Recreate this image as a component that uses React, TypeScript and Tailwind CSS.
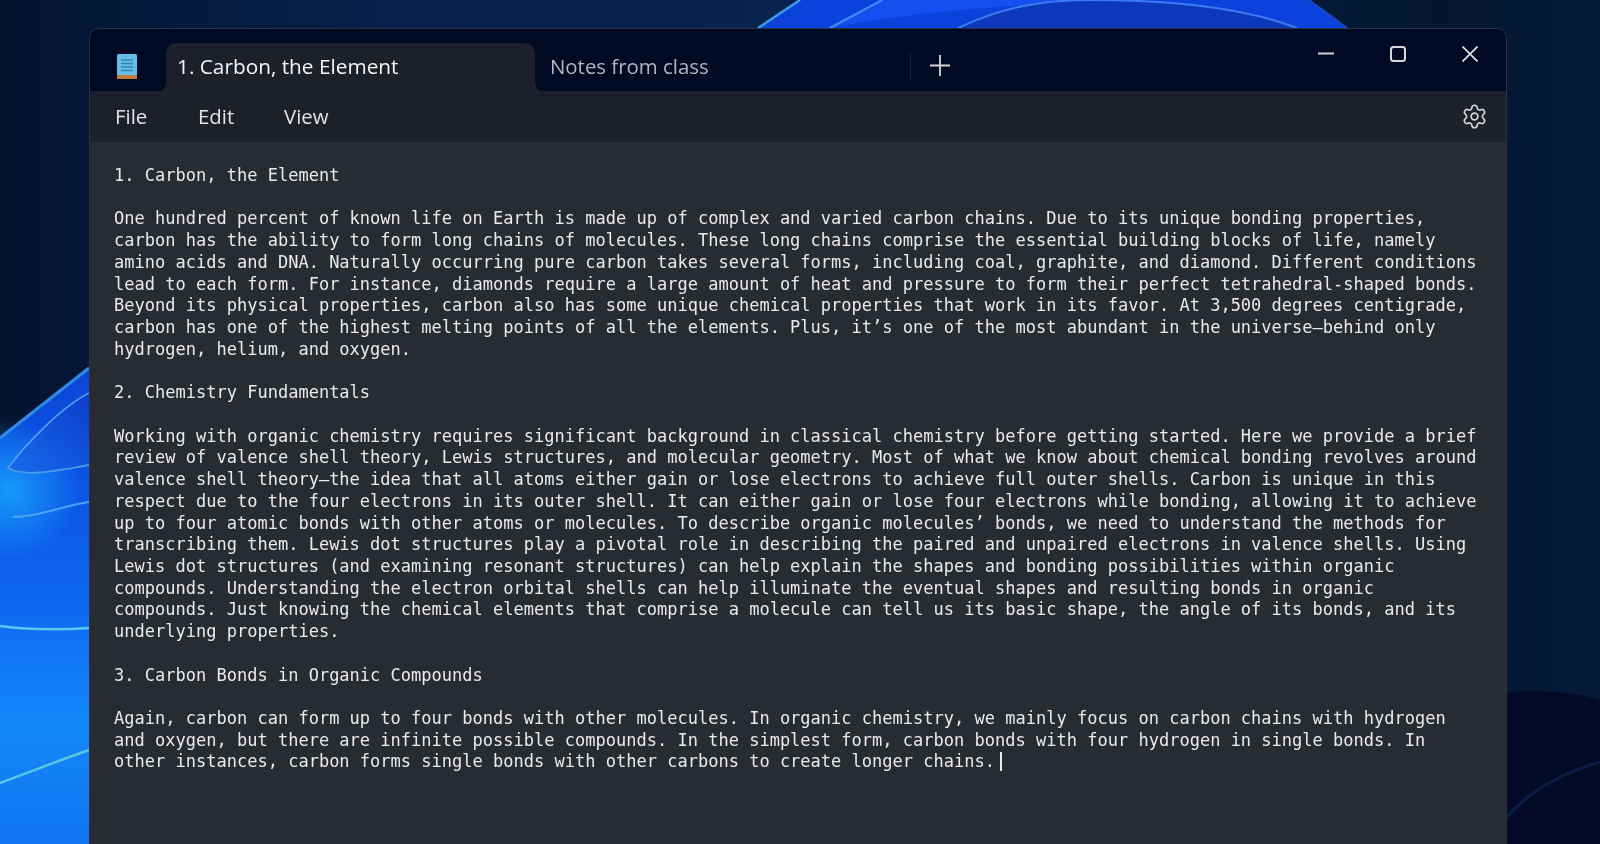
import React from 'react';
import { Settings } from 'lucide-react';

const noteLines = [
  '1. Carbon, the Element',
  '',
  'One hundred percent of known life on Earth is made up of complex and varied carbon chains. Due to its unique bonding properties,',
  'carbon has the ability to form long chains of molecules. These long chains comprise the essential building blocks of life, namely',
  'amino acids and DNA. Naturally occurring pure carbon takes several forms, including coal, graphite, and diamond. Different conditions',
  'lead to each form. For instance, diamonds require a large amount of heat and pressure to form their perfect tetrahedral-shaped bonds.',
  'Beyond its physical properties, carbon also has some unique chemical properties that work in its favor. At 3,500 degrees centigrade,',
  'carbon has one of the highest melting points of all the elements. Plus, it’s one of the most abundant in the universe—behind only',
  'hydrogen, helium, and oxygen.',
  '',
  '2. Chemistry Fundamentals',
  '',
  'Working with organic chemistry requires significant background in classical chemistry before getting started. Here we provide a brief',
  'review of valence shell theory, Lewis structures, and molecular geometry. Most of what we know about chemical bonding revolves around',
  'valence shell theory—the idea that all atoms either gain or lose electrons to achieve full outer shells. Carbon is unique in this',
  'respect due to the four electrons in its outer shell. It can either gain or lose four electrons while bonding, allowing it to achieve',
  'up to four atomic bonds with other atoms or molecules. To describe organic molecules’ bonds, we need to understand the methods for',
  'transcribing them. Lewis dot structures play a pivotal role in describing the paired and unpaired electrons in valence shells. Using',
  'Lewis dot structures (and examining resonant structures) can help explain the shapes and bonding possibilities within organic',
  'compounds. Understanding the electron orbital shells can help illuminate the eventual shapes and resulting bonds in organic',
  'compounds. Just knowing the chemical elements that comprise a molecule can tell us its basic shape, the angle of its bonds, and its',
  'underlying properties.',
  '',
  '3. Carbon Bonds in Organic Compounds',
  '',
  'Again, carbon can form up to four bonds with other molecules. In organic chemistry, we mainly focus on carbon chains with hydrogen',
  'and oxygen, but there are infinite possible compounds. In the simplest form, carbon bonds with four hydrogen in single bonds. In',
];
const lastLine = 'other instances, carbon forms single bonds with other carbons to create longer chains.';

const Wallpaper = () => (
  <svg className="absolute inset-0 blur-[0.6px]" width="1600" height="844" viewBox="0 0 1600 844">
    <defs>
      <linearGradient id="sky" x1="0" y1="0" x2="1" y2="0">
        <stop offset="0" stopColor="#031430" />
        <stop offset="0.25" stopColor="#07214c" />
        <stop offset="0.6" stopColor="#07244f" />
        <stop offset="0.9" stopColor="#04162f" />
        <stop offset="1" stopColor="#051a3a" />
      </linearGradient>
      <linearGradient id="petal" x1="0" y1="370" x2="0" y2="844" gradientUnits="userSpaceOnUse">
        <stop offset="0" stopColor="#0b46d4" />
        <stop offset="0.2" stopColor="#0c52e6" />
        <stop offset="0.45" stopColor="#0d62ee" />
        <stop offset="0.75" stopColor="#1488fa" />
        <stop offset="1" stopColor="#0f74ee" />
      </linearGradient>
      <radialGradient id="glow" cx="10" cy="490" r="70" gradientUnits="userSpaceOnUse">
        <stop offset="0" stopColor="#169bf8" />
        <stop offset="1" stopColor="#169bf8" stopOpacity="0" />
      </radialGradient>
      <linearGradient id="inner" x1="89" y1="393" x2="20" y2="468" gradientUnits="userSpaceOnUse">
        <stop offset="0" stopColor="#0b3cc8" />
        <stop offset="1" stopColor="#1766ea" />
      </linearGradient>
    </defs>
    <rect width="1600" height="844" fill="url(#sky)" />
    {/* top of the bloom */}
    <path d="M758 28 L800 0 L1309 0 C1322 8 1336 18 1347 28 Z" fill="#0c42dc" />
    <path d="M830 28 L882 0 L1140 0 C1000 4 900 14 830 28 Z" fill="#164ff0" />
    <path d="M958 28 C1000 8 1040 0 1090 0 C1180 0 1250 10 1297 28 Z" fill="#0d38bc" />
    <path d="M758 28 L800 0" fill="none" stroke="#3f9ae8" strokeWidth="2.5" />
    <path d="M830 28 L882 0" fill="none" stroke="#3f8eee" strokeWidth="2" />
    <path d="M958 28 C1000 8 1040 0 1090 0 C1180 0 1250 10 1297 28" fill="none" stroke="#3a7cf0" strokeWidth="2" />
    <path d="M1347 28 L1309 0" fill="none" stroke="#1c48b8" strokeWidth="2" />
    {/* left petals */}
    <path d="M0 438 L89 368 L89 844 L0 844 Z" fill="url(#petal)" />
    <rect x="0" y="420" width="89" height="140" fill="url(#glow)" />
    <path d="M0 438 L89 368" stroke="#2f8ae8" strokeWidth="3" fill="none" />
    <path d="M89 393 C60 408 25 445 8 468 C25 478 60 470 89 465 Z" fill="url(#inner)" />
    <path d="M89 393 C60 408 25 445 8 468 C25 478 60 470 89 465" fill="none" stroke="#4a9cea" strokeWidth="1.8" />
    <path d="M13 517 C40 517 65 505 89 502" fill="none" stroke="#4aa4f2" strokeWidth="2" />
    <path d="M0 626 C30 630 60 630 89 628" fill="none" stroke="#5ac8ee" strokeWidth="2.5" />
    <path d="M0 783 C30 772 60 760 89 750" fill="none" stroke="#58c6e0" strokeWidth="2.5" />
    {/* dark hills on the right */}
    <path d="M1506 692 C1540 690 1575 692 1600 700 L1600 844 L1506 844 Z" fill="#020a26" />
    <path d="M1506 818 C1530 790 1565 772 1600 762" fill="none" stroke="#0b1c46" strokeWidth="3" />
  </svg>
);

const NotepadIcon = () => (
  <svg width="20" height="25" viewBox="0 0 20 25">
    <rect x="0" y="0" width="20" height="25" rx="1.5" fill="#66bdea" />
    <rect x="0" y="21" width="20" height="4" fill="#c07a3e" />
    <path d="M4 6h12M4 9.5h12M4 13h12M4 16.5h12" stroke="#3a83ad" strokeWidth="1.3" />
  </svg>
);

const App = () => (
  <div className="relative w-[1600px] h-[844px] overflow-hidden bg-[#041a3f] font-['Open_Sans',sans-serif]">
    <Wallpaper />
    <div className="relative flex flex-col ml-[89px] mt-[28px] w-[1418px] h-[816px] rounded-t-[10px] border-x border-t border-[#2a3244] overflow-hidden blur-[0.4px]">
      <div className="flex h-[62px] shrink-0 bg-[#1c202b]">
        <div className="flex items-start w-[76px] pt-[25px] pl-[27px] bg-[#000a24] rounded-br-lg">
          <NotepadIcon />
        </div>
        <div className="pt-[14px] bg-[#000a24]">
          <div className="flex items-center w-[369px] h-full rounded-t-[10px] bg-[#1c202b] pb-[1px] pl-[11px] text-[20.8px] font-medium text-[#f6f6f6]">
            1. Carbon, the Element
          </div>
        </div>
        <div className="relative flex flex-1 bg-[#000a24] rounded-bl-lg">
          <div className="flex items-center w-[375px] pt-[12px] pl-[15px] text-[20.4px] text-[#b4b6bc]">
            Notes from class
          </div>
          <div className="mt-[24px] h-[26px] w-px bg-[#1c2235]" />
          <div className="pl-[19px] pt-[26px]">
            <svg width="20" height="21" viewBox="0 0 20 21" stroke="#d8d8d8" strokeWidth="1.8" fill="none">
              <path d="M10 0v21M0 10.5h20" />
            </svg>
          </div>
          <div className="ml-auto flex items-start pt-[17px] pr-[28px]">
            <svg className="mr-[56px]" width="16" height="16" viewBox="0 0 16 16" stroke="#cfcfcf" strokeWidth="2" fill="none">
              <path d="M0 7.5h16" />
            </svg>
            <svg className="mr-[56px]" width="16" height="16" viewBox="0 0 16 16" stroke="#d8d8d8" strokeWidth="2" fill="none">
              <rect x="1" y="1" width="14" height="14" rx="2.5" />
            </svg>
            <svg width="16" height="16" viewBox="0 0 16 16" stroke="#e4e4e4" strokeWidth="1.7" fill="none">
              <path d="M0.5 0.5l15 15M15.5 0.5l-15 15" />
            </svg>
          </div>
        </div>
      </div>
      <div className="flex items-center h-[51px] shrink-0 bg-[#1c202b] pl-[25px] pr-[18px] text-[20.4px] text-[#e2e3e6]">
        <span className="w-[83px]">File</span>
        <span className="w-[86px]">Edit</span>
        <span>View</span>
        <Settings className="ml-auto text-[#d4d4d4]" size={27} strokeWidth={1.5} />
      </div>
      <div className="flex-1 bg-[#292b33] pt-[23px] pl-[24px] font-['DejaVu_Sans_Mono',monospace] text-[17.03px] leading-[21.73px] text-[#eaeaea] whitespace-pre">
        {noteLines.map((line, i) => (
          <div key={i} className="h-[21.73px]">{line}</div>
        ))}
        <div className="h-[21.73px] flex">
          {lastLine}
          <span className="ml-[5px] mt-[1px] w-[2px] h-[19px] bg-[#e8e8e8]" />
        </div>
      </div>
    </div>
  </div>
);

export default App;
